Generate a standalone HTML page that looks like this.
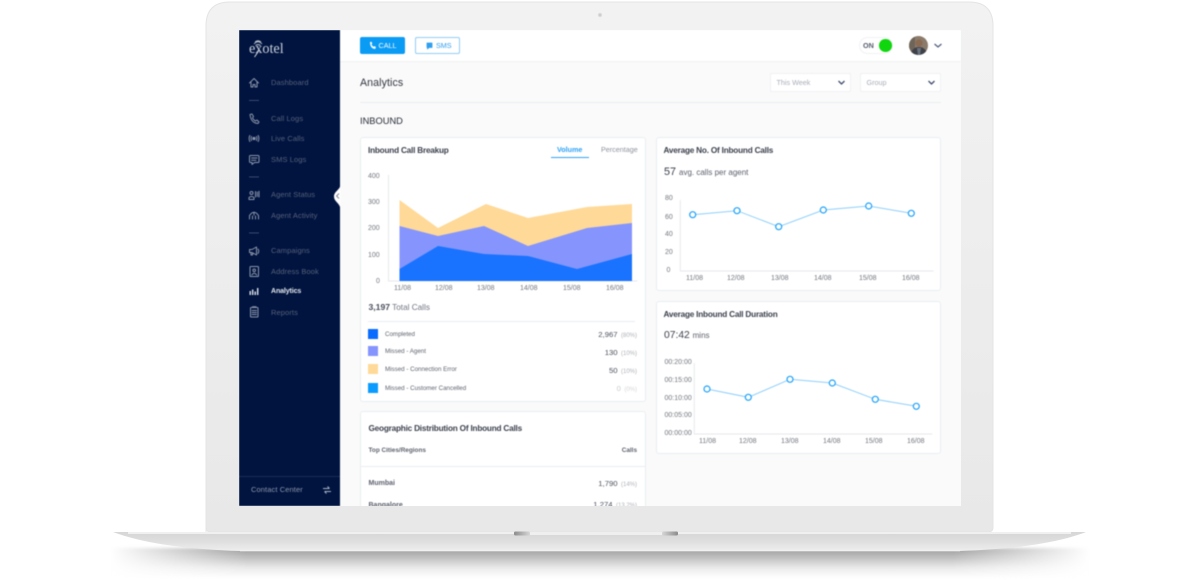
<!DOCTYPE html>
<html><head><meta charset="utf-8"><style>
html,body{margin:0;padding:0;background:#fff}
#p{position:relative;width:1200px;height:580px;overflow:hidden;background:#fff;font-family:"Liberation Sans",sans-serif;color:#3c4252}
.t{position:absolute;line-height:0;white-space:nowrap;margin-top:.6px}
.t2{margin-top:-1px;word-spacing:-1px}
.r{position:absolute;box-sizing:border-box}
#s{position:absolute;left:0;top:0;width:1200px;height:580px;clip-path:inset(30px 239px 74px 239px);background:#fafafa;filter:blur(.4px)}
.card{position:absolute;box-sizing:border-box;background:#fff;border:1px solid #e9edf3;border-radius:3px}
.t.n{font-size:7.5px;color:#566079;letter-spacing:.1px;margin-top:0}
.h{font-size:8.2px;font-weight:bold;color:#3b404c;letter-spacing:-.2px}
.ax{font-size:7px;color:#74777f}
.lg{font-size:6.2px;color:#60646f}
.v{font-size:7.700px;color:#4b505c}
.pc{font-size:6px;color:#b0b2b8}
svg{position:absolute;left:0;top:0}
</style></head><body><div id="p">

<svg width="1200" height="580">
<defs>
<linearGradient id="ld" x1="0" y1="0" x2="0" y2="1"><stop offset="0" stop-color="#f2f2f2"/><stop offset="1" stop-color="#e8e8e8"/></linearGradient>
<linearGradient id="bs" x1="0" y1="0" x2="0" y2="1"><stop offset="0" stop-color="#d6d6d6"/><stop offset=".5" stop-color="#dfdfdf"/><stop offset="1" stop-color="#eeeeee"/></linearGradient>
<linearGradient id="sh" x1="0" y1="0" x2="0" y2="1"><stop offset="0" stop-color="#9a9a9a"/><stop offset=".3" stop-color="#bdbdbd"/><stop offset=".65" stop-color="#e9e9e9"/><stop offset="1" stop-color="#fff"/></linearGradient>
<linearGradient id="fade" x1="0" y1="0" x2="1" y2="0"><stop offset="0" stop-color="#000"/><stop offset=".14" stop-color="#fff"/><stop offset=".86" stop-color="#fff"/><stop offset="1" stop-color="#000"/></linearGradient>
<mask id="m" maskUnits="userSpaceOnUse" x="100" y="540" width="1000" height="40"><rect x="110" y="540" width="980" height="40" fill="url(#fade)"/></mask>
<linearGradient id="no" x1="0" y1="0" x2="1" y2="0"><stop offset="0" stop-color="#8b8b8b"/><stop offset="1" stop-color="#d6d6d6"/></linearGradient>
<linearGradient id="no2" x1="1" y1="0" x2="0" y2="0"><stop offset="0" stop-color="#8b8b8b"/><stop offset="1" stop-color="#d6d6d6"/></linearGradient>
<filter id="bl" x="-5%" y="-50%" width="110%" height="200%"><feGaussianBlur stdDeviation="1.500"/></filter>
</defs>
<g mask="url(#m)"><rect x="110" y="548" width="980" height="30" fill="url(#sh)" filter="url(#bl)"/></g>
<path d="M206 532V26Q206 2 230 2H969Q993 2 993 26V527Q993 532 988 532H211Q206 532 206 527Z" fill="url(#ld)" stroke="#e4e4e4" stroke-width="1"/>
<circle cx="600" cy="15" r="2.2" fill="#dcdcdc"/><circle cx="600" cy="15" r="1" fill="#c8c8c8"/>
<path d="M113 532H1086C1060 542 1020 549 960 551H240C180 549 140 542 113 532Z" fill="url(#bs)"/>
<rect x="128" y="532" width="943" height="2" fill="#f0f0f0"/>
<rect x="240" y="550" width="720" height="1.300" fill="#f1f1f1"/>
<rect x="514" y="531.500" width="16" height="4" rx="1.500" fill="url(#no)"/>
<rect x="530" y="532" width="132" height="3" fill="#efefef"/>
<rect x="662" y="531.500" width="16" height="4" rx="1.500" fill="url(#no2)"/>
</svg>

<div id="s">
<div class="r" style="left:340px;top:30px;width:621px;height:31px;background:#fff;box-shadow:0 .5px 1.500px rgba(30,40,70,.08)"></div>
<div class="r" style="left:239px;top:30px;width:100.500px;height:476px;background:#00143f"></div>
<div class="r" style="left:239px;top:476px;width:100.500px;height:1px;background:#1c2c55"></div>

<!-- logo -->
<div class="t" style="left:249px;top:48px;font:14.200px 'Liberation Serif',serif;color:#c9cfdb;line-height:0">exotel</div>
<svg width="1200" height="580">
<g fill="none" stroke="#b8bfce" stroke-width=".9">
<path d="M254 44Q258 39.500 262 44M255 42Q258 39.500 261 42M255.500 45.500Q258 43.500 260.500 45.500"/>
<path d="M254.500 57L259 50.500" stroke="#dfe3ea"/>
</g>
<!-- sidebar icons -->
<g fill="none" stroke="#8c95ab" stroke-width="1" stroke-linejoin="round" stroke-linecap="round">
<path d="M249.500 83L254 78.500L258.500 83M251 82V87H253V84.500H255V87H257V82"/>
<path d="M250 114.500L252 114L253.500 116.500L252.500 118Q253.500 120 255.500 121L257 120L259 122L258 123.500Q251 123 250 114.500Z"/>
<path d="M249.800 135.500Q248.500 138.500 249.800 141.500M258.200 135.500Q259.500 138.500 258.200 141.500M251.500 136.500Q250.800 138.500 251.500 140.500M256.500 136.500Q257.200 138.500 256.500 140.500"/>
<circle cx="254" cy="138.500" r="1.100" fill="#8c95ab"/>
<path d="M250.500 155.500H258Q259 155.500 259 156.500V161.500Q259 162.500 258 162.500H254.500L252 164.500V162.500H250.500Q249.500 162.500 249.500 161.500V156.500Q249.500 155.500 250.500 155.500ZM251.500 158H257M251.500 160.300H256"/>
<circle cx="251.500" cy="193" r="1.500"/><path d="M249 199.500V197.500Q251.500 195.500 254 197.500V199.500ZM255.500 191.500V197M257.300 192V196.500M259 191.300V197"/>
<path d="M249.500 219V215.500Q254 209 258.500 215.500V219M252.500 219V216M255.500 219V216M254 213V215"/>
<path d="M249.500 249.500V252.500H252L256.500 255V247L252 249.500ZM258 249Q259.500 251 258 253.500M251 252.500V255H252.500V253"/>
<rect x="250" y="266.500" width="8.500" height="10" rx=".8"/><circle cx="254.200" cy="270.300" r="1.300"/><path d="M251.800 275Q254.200 271.500 256.700 275"/>
<rect x="250.500" y="307.500" width="7.500" height="9.500" rx=".8"/><path d="M252 310.500H256.500M252 312.500H256.500M252 314.500H256.500M252.500 306.800H256"/>
</g>
<g fill="#dfe3ec"><rect x="249.500" y="291" width="1.400" height="4"/><rect x="252" y="289.500" width="1.400" height="5.500"/><rect x="254.500" y="291.500" width="1.400" height="3.500"/><rect x="257" y="288" width="1.400" height="7"/></g>
<g fill="#49557a"><rect x="249" y="100" width="10" height=".8"/><rect x="249" y="176.500" width="10" height=".8"/><rect x="249" y="232.500" width="10" height=".8"/></g>
<path d="M340.500 184C340.500 190 334 191 334 196.500C334 202 340.500 203 340.500 210Z" fill="#fff"/>
<path d="M339 193.500L336.600 196L339 198.500" fill="none" stroke="#6a6f7c" stroke-width=".9"/>
<g fill="none" stroke="#aab2c4" stroke-width="1"><path d="M323 488.500H329.500M327.500 486.500L329.500 488.500M331 491.500H324.500M326.500 493.500L324.500 491.500"/></g>
</svg>
<div class="t n" style="left:271px;top:83px">Dashboard</div>
<div class="t n" style="left:271px;top:118.500px">Call Logs</div>
<div class="t n" style="left:271px;top:139px">Live Calls</div>
<div class="t n" style="left:271px;top:159.500px">SMS Logs</div>
<div class="t n" style="left:271px;top:195px">Agent Status</div>
<div class="t n" style="left:271px;top:215.500px">Agent Activity</div>
<div class="t n" style="left:271px;top:251px">Campaigns</div>
<div class="t n" style="left:271px;top:271.500px">Address Book</div>
<div class="t n" style="left:271px;top:292px;color:#e6e9f0;font-weight:bold;font-size:7px;letter-spacing:-.1px">Analytics</div>
<div class="t n" style="left:271px;top:312.500px">Reports</div>
<div class="t n" style="left:251px;top:490px;color:#8c95aa">Contact Center</div>

<!-- top bar -->
<div class="r" style="left:360px;top:37px;width:45px;height:17px;background:#0a9bf5;border-radius:2px"></div>
<div class="t" style="left:378.500px;top:45.200px;font-size:7.200px;color:#fff">CALL</div>
<div class="r" style="left:415px;top:37px;width:45px;height:17px;border:1px solid #8fcef7;border-radius:2px;background:#fff"></div>
<div class="t" style="left:436px;top:45.700px;font-size:7.200px;color:#2f9ff0">SMS</div>
<div class="r" style="left:859px;top:37px;width:34px;height:17px;border:1px solid #f0f1f4;border-radius:9px;background:#fff"></div>
<div class="t" style="left:863px;top:45.200px;font-size:7.200px;font-weight:bold;color:#555b6b">ON</div>
<div class="r" style="left:879px;top:39px;width:12.500px;height:12.500px;border-radius:50%;background:#10d60e"></div>

<!-- page heading -->
<div class="t" style="left:360px;top:82px;font-size:10.600px;color:#30353f;letter-spacing:.1px">Analytics</div>
<div class="r" style="left:770px;top:73px;width:81px;height:19px;background:#fff;border:1px solid #eff1f5;border-radius:2px"></div>
<div class="r" style="left:860px;top:73px;width:81px;height:19px;background:#fff;border:1px solid #eff1f5;border-radius:2px"></div>
<div class="t" style="left:776.500px;top:82.500px;font-size:7.200px;color:#a9adb8">This Week</div>
<div class="t" style="left:866.500px;top:82px;font-size:7.200px;color:#a9adb8">Group</div>
<div class="r" style="left:360px;top:101.500px;width:581px;height:1px;background:#e8edf3"></div>
<div class="t" style="left:360px;top:120px;font-size:9.300px;color:#272c38">INBOUND</div>

<!-- cards -->
<div class="card" style="left:360px;top:137px;width:286px;height:265px"></div>
<div class="card" style="left:360px;top:411px;width:286px;height:130px"></div>
<div class="card" style="left:655.500px;top:137px;width:285.500px;height:154px"></div>
<div class="card" style="left:655.500px;top:301px;width:285.500px;height:153px"></div>

<svg width="1200" height="580">
<path d="M370 42L371.500 41.800L372.300 43.500L371.500 44.500Q372.300 46 373.700 46.700L374.800 46L376 47.500L375 49Q370 48.500 370 42Z" fill="#fff"/>
<path d="M427 43H432V47.500H429L427.500 49V47.500H427Z" fill="#2f9ff0" stroke="#2f9ff0" stroke-width=".8" stroke-linejoin="round"/>
<defs><clipPath id="av"><circle cx="918.500" cy="45.500" r="9.500"/></clipPath></defs>
<g clip-path="url(#av)"><rect x="909" y="36" width="19" height="19" fill="#8b7b6b"/><rect x="909" y="36" width="6" height="19" fill="#6f6458"/><circle cx="919" cy="43" r="3.500" fill="#8a6a50"/><path d="M910 56Q912 47 919 47Q926 47 928 56Z" fill="#3d4148"/><path d="M917 48H921L920 55H918Z" fill="#6d7480"/></g>
<g fill="none" stroke="#4d5a78" stroke-width="1.200"><path d="M934.500 44L938 47L941.500 44"/></g>
<g fill="none" stroke="#3f4c6b" stroke-width="1.300"><path d="M838.500 81L841.500 84L844.500 81M928.500 81L931.500 84L934.500 81"/></g>
<path d="M388.500 175V281H637.500" fill="none" stroke="#e6e8ed" stroke-width="1"/>
<path d="M399.500 200L438 228L486 204L528 218L587 207L632 204V281H399.500Z" fill="#ffd998"/>
<path d="M399.500 226L438 236L484 226L528 246L587 228L632 223V281H399.500Z" fill="#8595fd"/>
<path d="M399.500 269L438 246L484 254L528 256L577 269L632 254V281H399.500Z" fill="#1a73fe"/>
<path d="M680.300 200V271H933.700" fill="none" stroke="#e6e8ed" stroke-width="1"/>
<polyline points="692.700,214.700 737,210.700 778.700,226.700 823.300,210 868.700,206 911.300,213.300" fill="none" stroke="#8fd0fb" stroke-width="1"/>
<g fill="#fff" stroke="#1ea1f8" stroke-width="1.200"><circle cx="692.700" cy="214.700" r="3"/><circle cx="737" cy="210.700" r="3"/><circle cx="778.700" cy="226.700" r="3"/><circle cx="823.300" cy="210" r="3"/><circle cx="868.700" cy="206" r="3"/><circle cx="911.300" cy="213.300" r="3"/></g>
<path d="M694.300 363V434H932.300" fill="none" stroke="#e6e8ed" stroke-width="1"/>
<polyline points="707,389 748.300,397.300 790,379.300 832.300,383 875.300,399.300 916.300,406.300" fill="none" stroke="#8fd0fb" stroke-width="1"/>
<g fill="#fff" stroke="#1ea1f8" stroke-width="1.200"><circle cx="707" cy="389" r="3"/><circle cx="748.300" cy="397.300" r="3"/><circle cx="790" cy="379.300" r="3"/><circle cx="832.300" cy="383" r="3"/><circle cx="875.300" cy="399.300" r="3"/><circle cx="916.300" cy="406.300" r="3"/></g>
</svg>

<!-- card 1 -->
<div class="t h" style="left:368px;top:150px">Inbound Call Breakup</div>
<div class="t" style="left:557px;top:149.500px;font-size:7.200px;font-weight:bold;color:#2ea3f5">Volume</div>
<div class="t" style="left:601px;top:149.500px;font-size:7.200px;color:#8e929c">Percentage</div>
<div class="r" style="left:551px;top:156.500px;width:38px;height:1.200px;background:#2ea3f5"></div>
<div class="t ax" style="left:368px;top:176.500px">400</div>
<div class="t ax" style="left:368px;top:202px">300</div>
<div class="t ax" style="left:368px;top:228px">200</div>
<div class="t ax" style="left:368px;top:255.500px">100</div>
<div class="t ax" style="left:376px;top:281.500px">0</div>
<div class="t ax" style="left:394px;top:288.500px">11/08</div>
<div class="t ax" style="left:435px;top:288.500px">12/08</div>
<div class="t ax" style="left:477px;top:288.500px">13/08</div>
<div class="t ax" style="left:520px;top:288.500px">14/08</div>
<div class="t ax" style="left:563px;top:288.500px">15/08</div>
<div class="t ax" style="left:606px;top:288.500px">16/08</div>
<div class="t" style="left:368.500px;top:306.500px;font-size:8.200px;color:#6f7480"><b style="color:#484d59;font-size:8.600px">3,197</b> Total Calls</div>
<div class="r" style="left:368px;top:320.500px;width:267px;height:1px;background:#e8edf3"></div>
<div class="r" style="left:368px;top:329px;width:10px;height:10px;background:#0a6cff"></div>
<div class="r" style="left:368px;top:346px;width:10px;height:10px;background:#8595fd"></div>
<div class="r" style="left:368px;top:364px;width:10px;height:10px;background:#ffd998"></div>
<div class="r" style="left:368px;top:383px;width:10px;height:10px;background:#0a9bff"></div>
<div class="t lg" style="left:385px;top:334px">Completed</div>
<div class="t lg" style="left:385px;top:351.500px">Missed - Agent</div>
<div class="t lg" style="left:385px;top:369.800px">Missed - Connection Error</div>
<div class="t lg" style="left:385px;top:388px">Missed - Customer Cancelled</div>
<div class="t t2" style="right:563px;top:333.500px"><span class="v">2,967</span> <span class="pc">(80%)</span></div>
<div class="t t2" style="right:563px;top:351.500px"><span class="v">130</span> <span class="pc">(10%)</span></div>
<div class="t t2" style="right:563px;top:369.500px"><span class="v">50</span> <span class="pc">(10%)</span></div>
<div class="t t2" style="right:563px;top:387.500px"><span class="v" style="color:#c9cbd0">0</span> <span class="pc" style="color:#d5d6da">(0%)</span></div>

<!-- card geo -->
<div class="t h" style="left:368.500px;top:428px">Geographic Distribution Of Inbound Calls</div>
<div class="t" style="left:368.500px;top:450.500px;font-size:6.400px;font-weight:bold;color:#5d626e">Top Cities/Regions</div>
<div class="t" style="right:563px;top:450.500px;font-size:6.400px;font-weight:bold;color:#5d626e">Calls</div>
<div class="r" style="left:361px;top:466px;width:284px;height:1px;background:#e8edf3"></div>
<div class="t" style="left:368.500px;top:483.500px;font-size:7px;font-weight:bold;color:#5d626e">Mumbai</div>
<div class="t" style="left:368.500px;top:505px;font-size:7px;font-weight:bold;color:#5d626e">Bangalore</div>
<div class="t t2" style="right:563px;top:482.500px"><span class="v">1,790</span> <span class="pc">(14%)</span></div>
<div class="t t2" style="right:563px;top:504px"><span class="v">1,274</span> <span class="pc">(13.2%)</span></div>

<!-- card 3 -->
<div class="t h" style="left:663.500px;top:150px">Average No. Of Inbound Calls</div>
<div class="t" style="left:664px;top:171.500px;font-size:10.800px;color:#3b404c">57 <span style="font-size:8px;color:#5c616d">avg. calls per agent</span></div>
<div class="t ax" style="left:665px;top:198.500px">80</div>
<div class="t ax" style="left:665px;top:217px">60</div>
<div class="t ax" style="left:665px;top:234px">40</div>
<div class="t ax" style="left:665px;top:252px">20</div>
<div class="t ax" style="left:666.500px;top:270px">0</div>
<div class="t ax" style="left:686px;top:278px">11/08</div>
<div class="t ax" style="left:727px;top:278px">12/08</div>
<div class="t ax" style="left:771px;top:278px">13/08</div>
<div class="t ax" style="left:814px;top:278px">14/08</div>
<div class="t ax" style="left:859px;top:278px">15/08</div>
<div class="t ax" style="left:902px;top:278px">16/08</div>

<!-- card 4 -->
<div class="t h" style="left:663.500px;top:314px">Average Inbound Call Duration</div>
<div class="t" style="left:664px;top:335px;font-size:10.300px;color:#3b404c">07:42 <span style="font-size:8px;color:#5c616d">mins</span></div>
<div class="t ax" style="left:664.500px;top:362.500px">00:20:00</div>
<div class="t ax" style="left:664.500px;top:380.500px">00:15:00</div>
<div class="t ax" style="left:664.500px;top:398px">00:10:00</div>
<div class="t ax" style="left:664.500px;top:415.500px">00:05:00</div>
<div class="t ax" style="left:664.500px;top:433.500px">00:00:00</div>
<div class="t ax" style="left:699px;top:441.500px">11/08</div>
<div class="t ax" style="left:739px;top:441.500px">12/08</div>
<div class="t ax" style="left:781px;top:441.500px">13/08</div>
<div class="t ax" style="left:823px;top:441.500px">14/08</div>
<div class="t ax" style="left:865px;top:441.500px">15/08</div>
<div class="t ax" style="left:907px;top:441.500px">16/08</div>
</div>
</div></body></html>
